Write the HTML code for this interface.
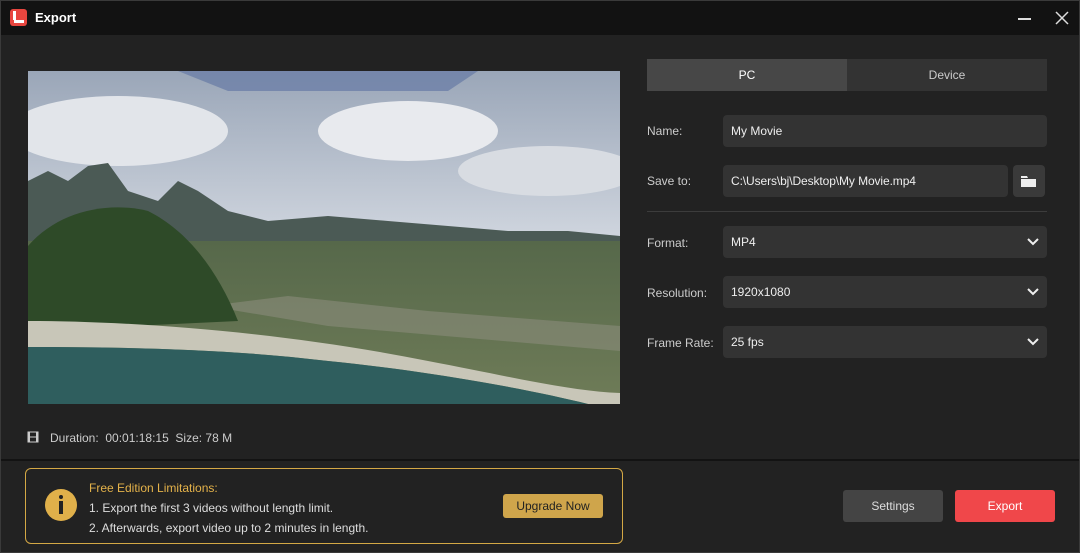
<!DOCTYPE html>
<html><head><style>
*{margin:0;padding:0;box-sizing:border-box}
body{width:1080px;height:553px;background:#222;font-family:"Liberation Sans",sans-serif;color:#ddd;position:relative;overflow:hidden;font-size:12px}
.win{position:absolute;inset:0;border:1px solid #3a3a3a}
.title{position:absolute;left:0;top:0;width:1080px;height:35px;background:#121212;border:1px solid #3a3a3a;border-bottom:none}
.abs{position:absolute}
.lbl{position:absolute;left:647px;font-size:12px;color:#ccc}
.field{position:absolute;left:723px;width:324px;height:32px;background:#333;border-radius:4px;color:#eee;font-size:12px;padding-left:8px;line-height:32px}
.chev{position:absolute;right:8px;top:10px}
.btn{position:absolute;height:32px;border-radius:3px;text-align:center;line-height:32px;font-size:12px}
</style></head><body>
<div class="win"></div>
<div class="title">
 <div class="abs" style="left:9px;top:8px;width:17px;height:17px;background:#e8463f;border-radius:3px"></div>
 <div class="abs" style="left:12px;top:10px;width:3px;height:9px;background:#fff"></div>
 <div class="abs" style="left:13px;top:19px;width:10px;height:3px;background:#fff"></div>
 <div class="abs" style="left:34px;top:9px;font-weight:bold;font-size:13px;color:#fff">Export</div>
 <div class="abs" style="left:1017px;top:17px;width:13px;height:1.5px;background:#ddd"></div>
 <svg class="abs" style="left:1054px;top:10px" width="14" height="14"><path d="M1 1L13 13M13 1L1 13" stroke="#ddd" stroke-width="1.5"/></svg>
</div>
<svg class="abs" style="left:28px;top:71px" width="592" height="333" viewBox="0 0 592 333">
 <defs><linearGradient id="sky" x1="0" y1="0" x2="0" y2="1"><stop offset="0" stop-color="#9aa6b8"/><stop offset=".5" stop-color="#cfd5de"/><stop offset="1" stop-color="#b7c0cc"/></linearGradient>
 <linearGradient id="fld" x1="0" y1="0" x2="0" y2="1"><stop offset="0" stop-color="#56684a"/><stop offset="1" stop-color="#6f7c58"/></linearGradient></defs>
 <rect width="592" height="333" fill="url(#sky)"/>
 <path d="M150 0H450L420 20H200Z" fill="#6d80a8" opacity=".8"/>
 <ellipse cx="90" cy="60" rx="110" ry="35" fill="#e2e5ea"/>
 <ellipse cx="380" cy="60" rx="90" ry="30" fill="#e8eaee"/>
 <ellipse cx="520" cy="100" rx="90" ry="25" fill="#d8dce2"/>
 <path d="M0 110L20 100L40 110L60 95L80 92L100 120L130 130L150 110L170 120L200 140L240 150L300 145L360 150L420 155L480 160L540 160L592 165V230H0Z" fill="#4b5a55"/>
 <path d="M0 170H592V333H0Z" fill="url(#fld)"/>
 <path d="M180 235L260 225L400 240L592 255V280L300 255Z" fill="#8a8c7c" opacity=".6"/>
 <path d="M0 175C30 140 80 130 120 140C160 160 190 200 210 250L0 260Z" fill="#2e4a28"/>
 <path d="M0 250C100 250 250 260 400 290C480 305 540 320 592 322V333H560C500 318 400 300 300 290C200 278 100 276 0 276Z" fill="#c8c6b8"/>
 <path d="M0 276C100 276 200 278 300 290C400 300 500 318 560 333H0Z" fill="#2f5e5e"/>
</svg>
<svg class="abs" style="left:27px;top:431px" width="12" height="12"><rect x="0.5" y="0.5" width="11" height="11" fill="#ccc"/><rect x="3" y="1.5" width="6" height="4" fill="#222"/><rect x="3" y="6.5" width="6" height="4" fill="#222"/></svg>
<div class="abs" style="left:50px;top:431px;color:#ccc">Duration:&nbsp; 00:01:18:15&nbsp; Size: 78 M</div>
<div class="abs" style="left:647px;top:59px;width:200px;height:32px;background:#474747;color:#fff;text-align:center;line-height:32px">PC</div>
<div class="abs" style="left:847px;top:59px;width:200px;height:32px;background:#333;color:#ccc;text-align:center;line-height:32px">Device</div>
<div class="lbl" style="top:124px">Name:</div>
<div class="field" style="top:115px">My Movie</div>
<div class="lbl" style="top:174px">Save to:</div>
<div class="field" style="top:165px;width:285px;letter-spacing:-0.1px">C:\Users\bj\Desktop\My Movie.mp4</div>
<div class="abs" style="left:1013px;top:165px;width:32px;height:32px;background:#3a3a3a;border-radius:4px"></div>
<svg class="abs" style="left:1021px;top:174px" width="16" height="14"><path d="M0 2h6l1 2h8v9H0z" fill="#eee"/><rect x="0" y="4" width="15" height="1" fill="#3a3a3a"/></svg>
<div class="abs" style="left:647px;top:211px;width:400px;height:1px;background:#3c3c3c"></div>
<div class="lbl" style="top:236px">Format:</div>
<div class="field" style="top:226px">MP4<svg class="chev" width="12" height="12"><path d="M1 3l5 5 5-5" stroke="#eee" stroke-width="2" fill="none"/></svg></div>
<div class="lbl" style="top:286px">Resolution:</div>
<div class="field" style="top:276px">1920x1080<svg class="chev" width="12" height="12"><path d="M1 3l5 5 5-5" stroke="#eee" stroke-width="2" fill="none"/></svg></div>
<div class="lbl" style="top:336px">Frame Rate:</div>
<div class="field" style="top:326px">25 fps<svg class="chev" width="12" height="12"><path d="M1 3l5 5 5-5" stroke="#eee" stroke-width="2" fill="none"/></svg></div>
<div class="abs" style="left:1px;top:459px;width:1078px;height:2px;background:#131313"></div>
<div class="abs" style="left:25px;top:468px;width:598px;height:76px;border:1px solid #d4a845;border-radius:6px"></div>
<div class="abs" style="left:45px;top:489px;width:32px;height:32px;border-radius:50%;background:#e0b04a"></div>
<div class="abs" style="left:59px;top:495px;width:4px;height:4px;background:#222;border-radius:50%"></div>
<div class="abs" style="left:59px;top:501px;width:4px;height:13px;background:#222"></div>
<div class="abs" style="left:89px;top:481px;color:#e4b24a">Free Edition Limitations:</div>
<div class="abs" style="left:89px;top:501px;color:#ddd">1. Export the first 3 videos without length limit.</div>
<div class="abs" style="left:89px;top:521px;color:#ddd">2. Afterwards, export video up to 2 minutes in length.</div>
<div class="btn" style="left:503px;top:494px;width:100px;height:24px;line-height:24px;background:#cfa54b;color:#222">Upgrade Now</div>
<div class="btn" style="left:843px;top:490px;width:100px;background:#444;color:#ddd">Settings</div>
<div class="btn" style="left:955px;top:490px;width:100px;background:#f0474a;color:#fff">Export</div>
</body></html>
